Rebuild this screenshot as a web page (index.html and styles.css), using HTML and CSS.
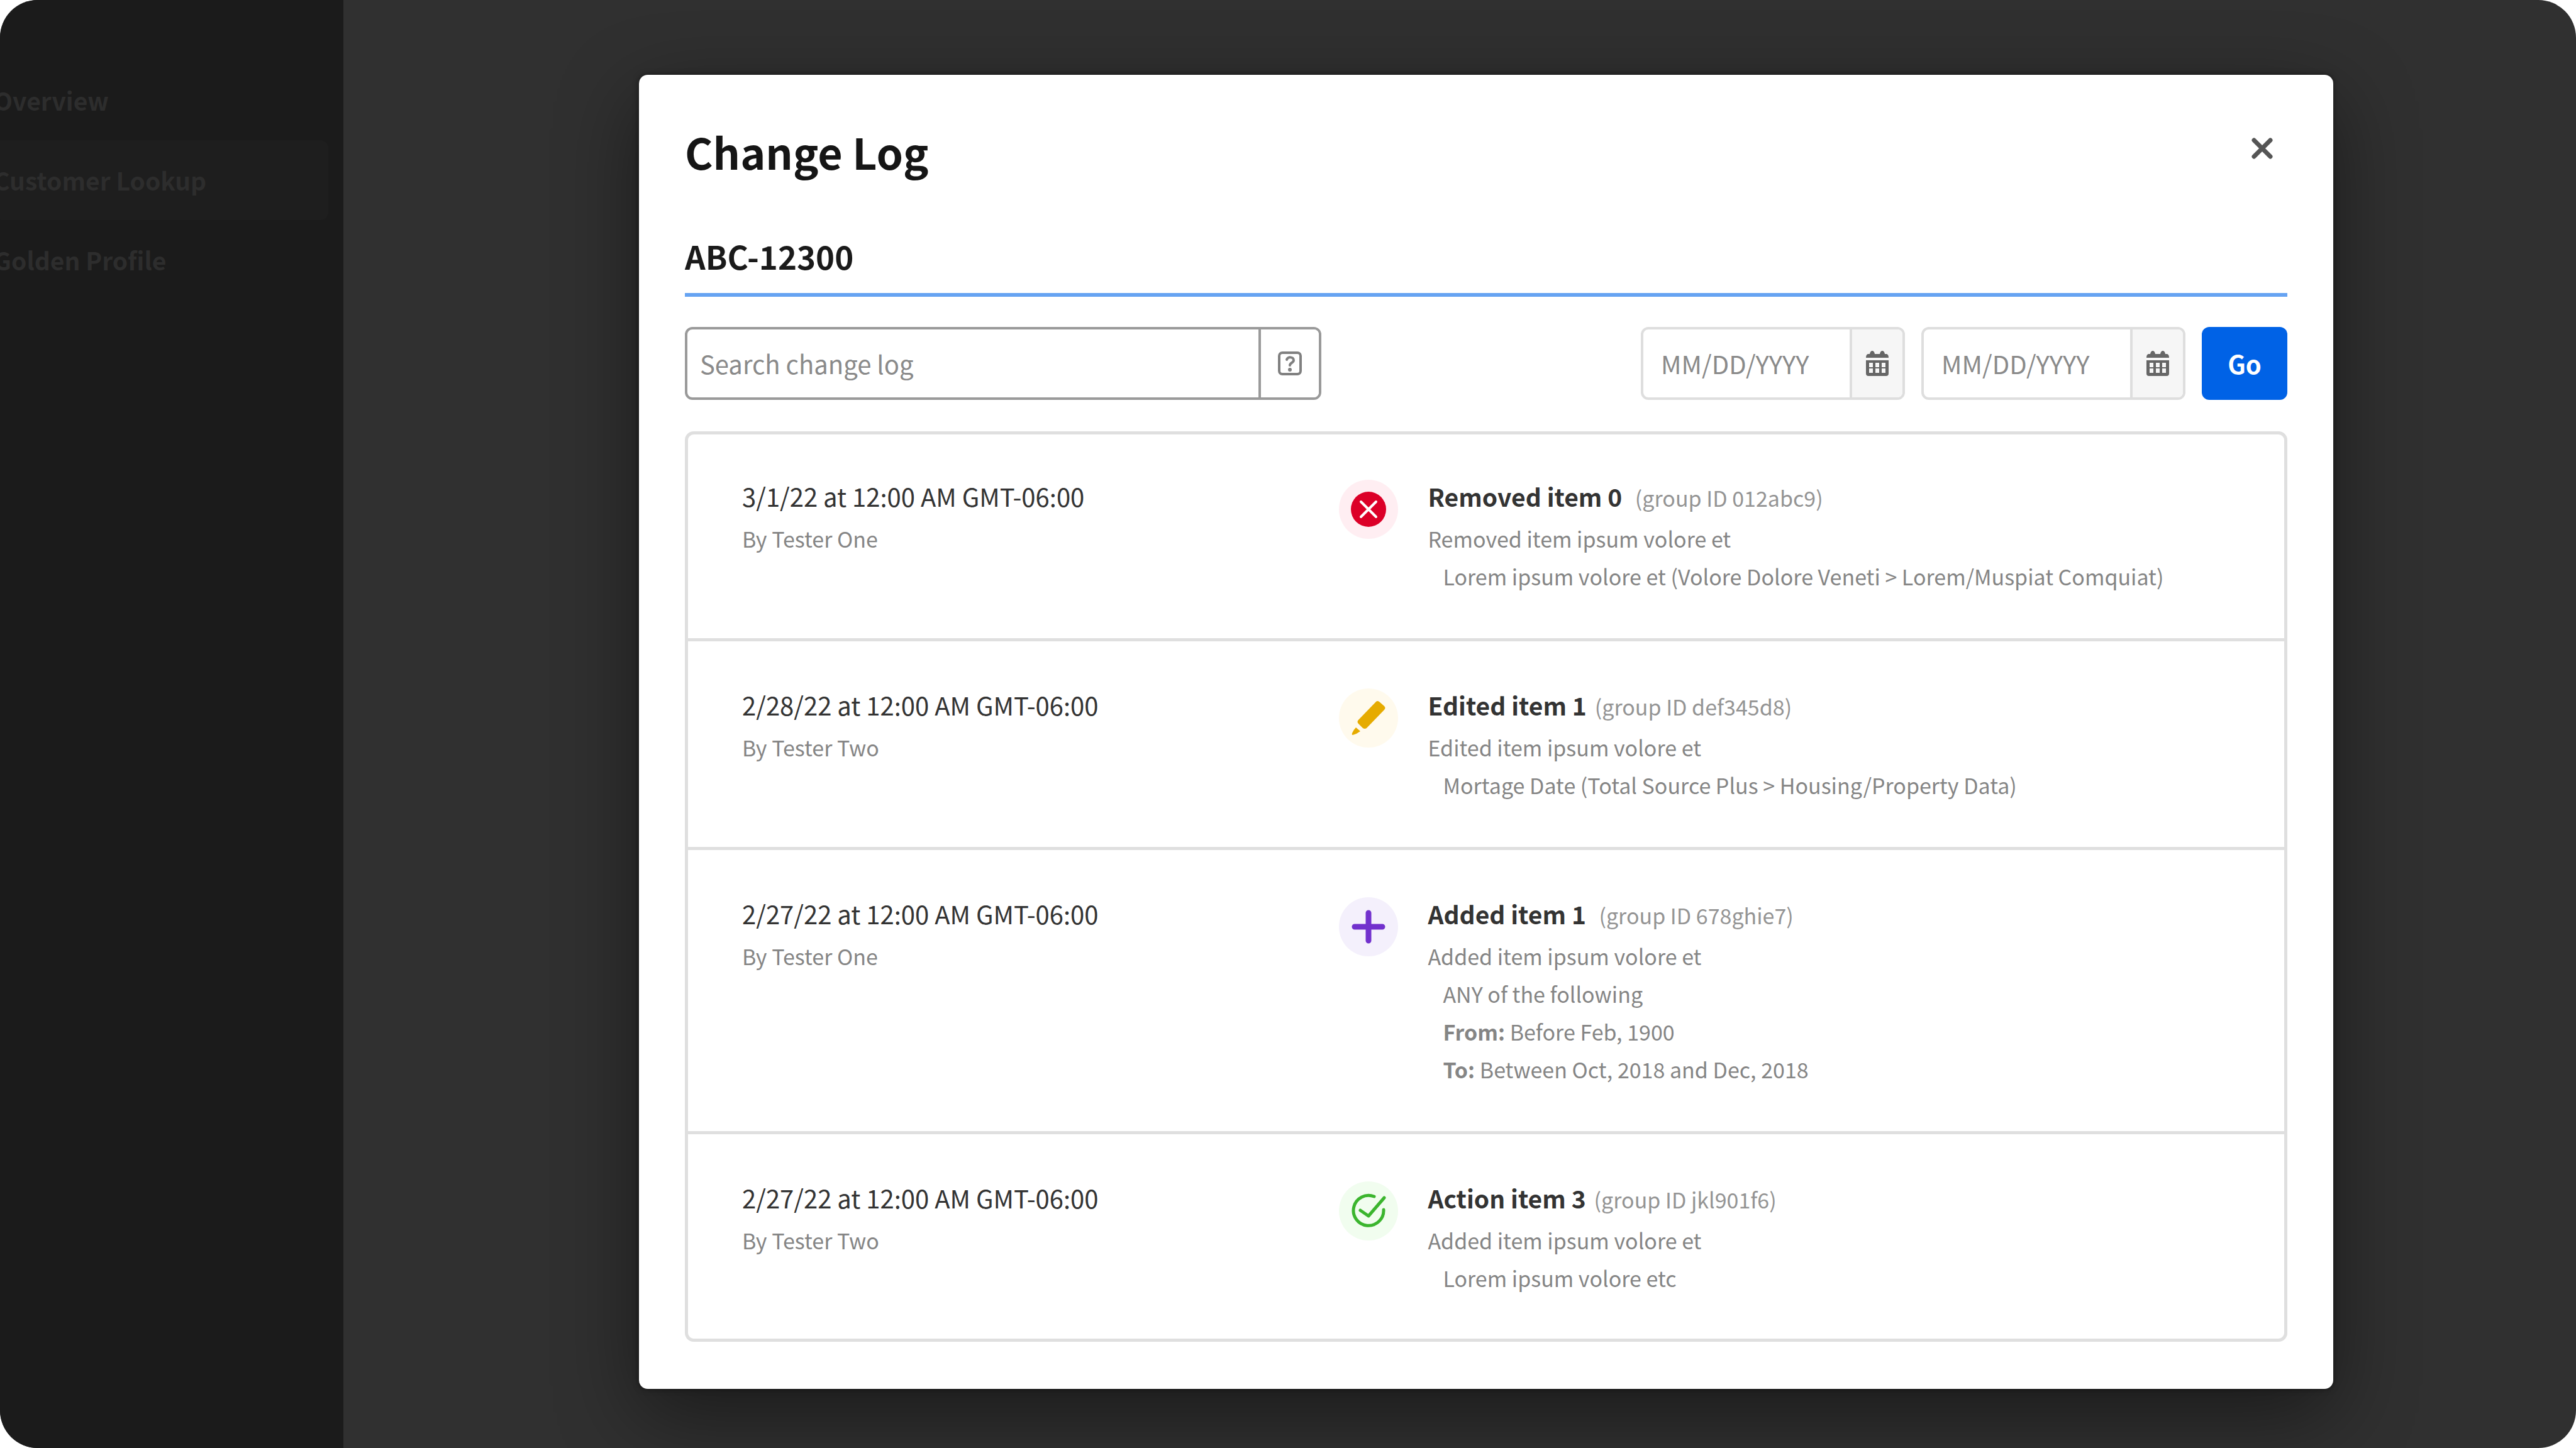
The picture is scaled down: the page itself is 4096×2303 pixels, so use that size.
FILE: index.html
```html
<!DOCTYPE html>
<html lang="en">
<head>
    <meta charset="UTF-8">
    <meta name="viewport" content="width=device-width, initial-scale=1.0">
    <title>Change Log</title>
    <link rel="stylesheet" href="styles.css">
</head>
<body>
    <div class="app">
        <nav class="sidebar">
            <a href="#">Overview</a>
            <a href="#" class="active">Customer Lookup</a>
            <a href="#">Golden Profile</a>
        </nav>
        <main>
            <div class="modal" role="dialog" aria-labelledby="modalTitle">
                <header class="modal-header">
                    <h1 id="modalTitle">Change Log</h1>
                    <button type="button" class="close-button" aria-label="Close">
                        <svg viewBox="0 0 36 36" width="36" height="36" fill="none" stroke="#555" stroke-width="7" stroke-linecap="round">
                            <path d="M5 5 L31 31 M31 5 L5 31"/>
                        </svg>
                    </button>
                </header>

                <h2>ABC-12300</h2>

                <form class="toolbar">
                    <div class="search field">
                        <input type="text" placeholder="Search change log" aria-label="Search change log">
                        <button type="button" aria-label="Search help">
                            <svg viewBox="0 0 38 38" width="38" height="38" fill="none" stroke="#808080" stroke-width="4" stroke-linecap="round">
                                <rect x="2" y="2" width="34" height="34" rx="5"/>
                                <path d="M14 13 C15 8 25 8 25 14 C25 18 19 18 19 22"/>
                                <circle cx="19" cy="29" r="3" fill="#808080" stroke="none"/>
                            </svg>
                        </button>
                    </div>
                    <div class="date field">
                        <input type="text" placeholder="MM/DD/YYYY" aria-label="Start date">
                        <button type="button" aria-label="Pick start date">
                            <svg viewBox="0 0 36 40" width="36" height="40" fill="#666">
                                <path d="M3 5 H6 Q7 0 10 0 Q13 0 14 5 H22 Q23 0 26 0 Q29 0 30 5 H33 Q36 6 36 11 H0 Q0 6 3 5 Z"/>
                                <path fill-rule="evenodd" d="M0 15 H36 V36 Q36 40 32 40 H4 Q0 40 0 36 Z M5 19 V26 H11 V19 Z M15 19 V26 H21 V19 Z M25 19 V26 H31 V19 Z M5 28 V35 H11 V28 Z M15 28 V35 H21 V28 Z M25 28 V35 H31 V28 Z"/>
                            </svg>
                        </button>
                    </div>
                    <div class="date field">
                        <input type="text" placeholder="MM/DD/YYYY" aria-label="End date">
                        <button type="button" aria-label="Pick end date">
                            <svg viewBox="0 0 36 40" width="36" height="40" fill="#666">
                                <path d="M3 5 H6 Q7 0 10 0 Q13 0 14 5 H22 Q23 0 26 0 Q29 0 30 5 H33 Q36 6 36 11 H0 Q0 6 3 5 Z"/>
                                <path fill-rule="evenodd" d="M0 15 H36 V36 Q36 40 32 40 H4 Q0 40 0 36 Z M5 19 V26 H11 V19 Z M15 19 V26 H21 V19 Z M25 19 V26 H31 V19 Z M5 28 V35 H11 V28 Z M15 28 V35 H21 V28 Z M25 28 V35 H31 V28 Z"/>
                            </svg>
                        </button>
                    </div>
                    <button type="submit" class="go-button">Go</button>
                </form>

                <ul class="log">
                    <li>
                        <div class="when">
                            <p class="time">3/1/22 at 12:00 AM GMT-06:00</p>
                            <p>By Tester One</p>
                        </div>
                        <span class="icon removed">
                            <svg viewBox="0 0 56 56" width="56" height="56">
                                <circle cx="28" cy="28" r="28" fill="#dc0028"/>
                                <path d="M16 16 L40 40 M40 16 L16 40" stroke="#fff" stroke-width="4" stroke-linecap="round"/>
                            </svg>
                        </span>
                        <div class="what">
                            <h3>Removed item 0 <span>&nbsp;(group ID 012abc9)</span></h3>
                            <p>Removed item ipsum volore et</p>
                            <p class="detail">Lorem ipsum volore et (Volore Dolore Veneti &gt; Lorem/Muspiat Comquiat)</p>
                        </div>
                    </li>
                    <li>
                        <div class="when">
                            <p class="time">2/28/22 at 12:00 AM GMT-06:00</p>
                            <p>By Tester Two</p>
                        </div>
                        <span class="icon edited">
                            <svg viewBox="0 0 56 56" width="56" height="56" fill="#e6ab00">
                                <path d="M40 2 Q42 0 45 2 L53 9 Q56 12 53 15 L25 44 Q22 46 19 44 L12 37 Q9 34 12 31 Z"/>
                                <path d="M8 43 L15 49 Q10 53 3 55 Q1 55 2 52 Q4 47 8 43 Z"/>
                            </svg>
                        </span>
                        <div class="what">
                            <h3>Edited item 1 <span>(group ID def345d8)</span></h3>
                            <p>Edited item ipsum volore et</p>
                            <p class="detail">Mortage Date (Total Source Plus &gt; Housing/Property Data)</p>
                        </div>
                    </li>
                    <li>
                        <div class="when">
                            <p class="time">2/27/22 at 12:00 AM GMT-06:00</p>
                            <p>By Tester One</p>
                        </div>
                        <span class="icon added">
                            <svg viewBox="0 0 56 56" width="56" height="56" fill="none" stroke="#7231cd" stroke-width="9" stroke-linecap="round">
                                <path d="M28 6 V50 M6 28 H50"/>
                            </svg>
                        </span>
                        <div class="what">
                            <h3>Added item 1 <span>&nbsp;(group ID 678ghie7)</span></h3>
                            <p>Added item ipsum volore et</p>
                            <p class="detail">ANY of the following</p>
                            <p class="detail"><b>From:</b> Before Feb, 1900</p>
                            <p class="detail"><b>To:</b> Between Oct, 2018 and Dec, 2018</p>
                        </div>
                    </li>
                    <li>
                        <div class="when">
                            <p class="time">2/27/22 at 12:00 AM GMT-06:00</p>
                            <p>By Tester Two</p>
                        </div>
                        <span class="icon action">
                            <svg viewBox="0 0 56 56" width="56" height="56" fill="none" stroke="#3bb52e" stroke-width="5" stroke-linecap="round" stroke-linejoin="round">
                                <path d="M37 5 A24 24 0 1 0 52 26"/>
                                <path d="M15 27 L28 36 L53 7"/>
                            </svg>
                        </span>
                        <div class="what">
                            <h3>Action item 3 <span>(group ID jkl901f6)</span></h3>
                            <p>Added item ipsum volore et</p>
                            <p class="detail">Lorem ipsum volore etc</p>
                        </div>
                    </li>
                </ul>
            </div>
        </main>
    </div>
</body>
</html>
```
FILE: styles.css
```css
* {
    box-sizing: border-box;
}

body {
    margin: 0;
    background: #fff;
    font-family: "Noto Sans CJK SC", "Noto Sans", sans-serif;
    font-size: 34px;
    line-height: 60px;
    color: #858585;
}

h1, h2, h3, p, ul {
    margin: 0;
    padding: 0;
}

button, input {
    font: inherit;
    margin: 0;
    padding: 0;
    border: none;
    background: none;
}

button {
    display: flex;
    align-items: center;
    justify-content: center;
    cursor: pointer;
}

svg {
    display: block;
}

.app {
    display: flex;
    min-height: 100vh;
    overflow: hidden;
    border-radius: 60px;
    background: #303030;
}

/* Sidebar */
.sidebar {
    flex: none;
    width: 546px;
    padding: 96px 24px 0 0;
    background: #1b1b1b;
}

.sidebar a {
    display: block;
    height: 127px;
    margin-left: -10px;
    border-radius: 12px;
    font-size: 39px;
    font-weight: bold;
    line-height: 127px;
    color: #2d2d2d;
    text-decoration: none;
}

.sidebar a.active {
    background: #1e1e1e;
}

main {
    flex: 1;
    padding: 119px 386px 92px 470px;
}

/* Modal */
.modal {
    padding: 82px 73px 75px;
    border-radius: 14px;
    background: #fff;
    box-shadow: 0 0 10px rgba(0, 0, 0, 0.5), 0 40px 130px rgba(0, 0, 0, 0.45);
}

.modal-header {
    display: flex;
    justify-content: space-between;
    align-items: flex-start;
}

h1 {
    font-size: 68px;
    line-height: 80px;
    color: #151515;
}

.close-button {
    width: 80px;
    height: 70px;
}

h2 {
    margin-top: 94px;
    padding-bottom: 27px;
    border-bottom: 6px solid #66a3f2;
    font-size: 51px;
    line-height: 64px;
    color: #1a1a1a;
}

/* Search and date filters */
.toolbar {
    display: flex;
    gap: 26px;
    height: 116px;
    margin-top: 48px;
    font-size: 40px;
}

.field {
    display: flex;
    overflow: hidden;
    border: 4px solid #dedede;
    border-radius: 12px;
}

.field input {
    flex: 1;
    min-width: 0;
    padding-left: 28px;
    color: #333;
}

.field input::placeholder {
    color: #8a8a8a;
    opacity: 1;
}

.field button {
    width: 84px;
    border-left: 4px solid #dedede;
    background: #f6f6f6;
}

.search {
    width: 1012px;
    margin-right: auto;
    border-color: #9a9a9a;
}

.search input {
    padding-left: 20px;
}

.search button {
    width: 96px;
    border-color: #9a9a9a;
    background: #fff;
}

.date {
    width: 420px;
}

.go-button {
    width: 136px;
    border-radius: 12px;
    background: #0062e6;
    color: #fff;
    font-weight: bold;
}

/* Log entries */
.log {
    margin-top: 50px;
    border: 5px solid #dfdfdf;
    border-radius: 14px;
    list-style: none;
}

.log li {
    display: grid;
    grid-template-columns: 12fr 96px 17fr;
    column-gap: 47px;
    padding: 69px 86px 68px;
}

.log li:first-child {
    padding-top: 66px;
}

.log li:last-child {
    padding-bottom: 66px;
}

.log li + li {
    border-top: 5px solid #dfdfdf;
}

.time, h3 {
    margin-bottom: 6px;
    line-height: 64px;
    color: #333;
}

.time {
    font-size: 40px;
}

h3 {
    font-size: 39px;
}

h3 span {
    margin-left: 4px;
    font-size: 34px;
    font-weight: normal;
    line-height: 1;
    color: #949494;
}

.detail {
    padding-left: 24px;
}

.icon {
    display: flex;
    align-items: center;
    justify-content: center;
    justify-self: end;
    width: 94px;
    height: 94px;
    margin-top: 6px;
    border-radius: 50%;
}

.removed {
    background: #ffeef2;
}

.edited {
    background: #fffaed;
}

.added {
    background: #f4f0fc;
}

.action {
    background: #f1fdef;
}
```
